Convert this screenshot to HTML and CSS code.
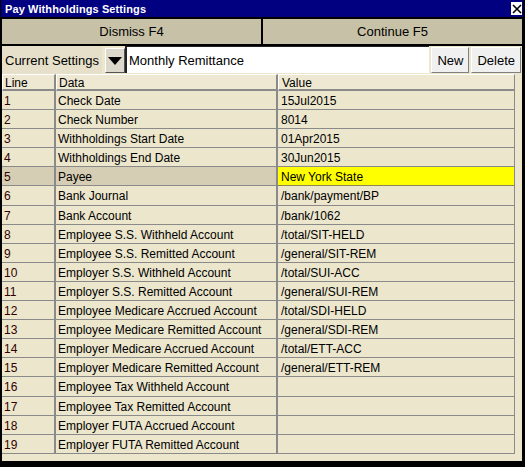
FILE: index.html
```html
<!DOCTYPE html>
<html>
<head>
<meta charset="utf-8">
<link rel="stylesheet" href="styles.css">
</head>
<body>
<div class="window">
  <div class="titlebar">
    <span class="title">Pay Withholdings Settings</span>
    <button class="close"><svg width="10" height="10" viewBox="0 0 10 10"><path d="M1 1 L9 9 M9 1 L1 9" stroke="#000" stroke-width="1.6"/></svg></button>
  </div>
  <div class="actions">
    <button class="action">Dismiss F4</button>
    <button class="action">Continue F5</button>
  </div>
  <div class="settings">
    <span class="label">Current Settings</span>
    <button class="drop"><svg width="14" height="8" viewBox="0 0 14 8"><path d="M0 0 H14 L7 8 Z" fill="#000"/></svg></button>
    <div class="input">Monthly Remittance</div>
    <button class="small">New</button>
    <button class="small">Delete</button>
  </div>
  <div class="table">
    <div class="row head"><div class="c1">Line</div><div class="c2">Data</div><div class="c3">Value</div></div>
    <div class="row"><div class="c1">1</div><div class="c2">Check Date</div><div class="c3">15Jul2015</div></div>
    <div class="row"><div class="c1">2</div><div class="c2">Check Number</div><div class="c3">8014</div></div>
    <div class="row"><div class="c1">3</div><div class="c2">Withholdings Start Date</div><div class="c3">01Apr2015</div></div>
    <div class="row"><div class="c1">4</div><div class="c2">Withholdings End Date</div><div class="c3">30Jun2015</div></div>
    <div class="row sel"><div class="c1">5</div><div class="c2">Payee</div><div class="c3">New York State</div></div>
    <div class="row"><div class="c1">6</div><div class="c2">Bank Journal</div><div class="c3">/bank/payment/BP</div></div>
    <div class="row"><div class="c1">7</div><div class="c2">Bank Account</div><div class="c3">/bank/1062</div></div>
    <div class="row"><div class="c1">8</div><div class="c2">Employee S.S. Withheld Account</div><div class="c3">/total/SIT-HELD</div></div>
    <div class="row"><div class="c1">9</div><div class="c2">Employee S.S. Remitted Account</div><div class="c3">/general/SIT-REM</div></div>
    <div class="row"><div class="c1">10</div><div class="c2">Employer S.S. Withheld Account</div><div class="c3">/total/SUI-ACC</div></div>
    <div class="row"><div class="c1">11</div><div class="c2">Employer S.S. Remitted Account</div><div class="c3">/general/SUI-REM</div></div>
    <div class="row"><div class="c1">12</div><div class="c2">Employee Medicare Accrued Account</div><div class="c3">/total/SDI-HELD</div></div>
    <div class="row"><div class="c1">13</div><div class="c2">Employee Medicare Remitted Account</div><div class="c3">/general/SDI-REM</div></div>
    <div class="row"><div class="c1">14</div><div class="c2">Employer Medicare Accrued Account</div><div class="c3">/total/ETT-ACC</div></div>
    <div class="row"><div class="c1">15</div><div class="c2">Employer Medicare Remitted Account</div><div class="c3">/general/ETT-REM</div></div>
    <div class="row"><div class="c1">16</div><div class="c2">Employee Tax Withheld Account</div><div class="c3"></div></div>
    <div class="row"><div class="c1">17</div><div class="c2">Employee Tax Remitted Account</div><div class="c3"></div></div>
    <div class="row"><div class="c1">18</div><div class="c2">Employer FUTA Accrued Account</div><div class="c3"></div></div>
    <div class="row"><div class="c1">19</div><div class="c2">Employer FUTA Remitted Account</div><div class="c3"></div></div>
  </div>
</div>
</body>
</html>
```

FILE: styles.css
```css
* { box-sizing: border-box; }
html, body { margin: 0; padding: 0; background: #000; }
body { width: 525px; height: 467px; overflow: hidden; font-family: "Liberation Sans", Arial, sans-serif; }
button { font-family: inherit; margin: 0; padding: 0; cursor: default; }

.window {
  width: 525px;
  height: 467px;
  background: #000;
  padding: 0 3px 6px 2px;
  display: flex;
  flex-direction: column;
}

.titlebar {
  height: 17px;
  background: #000080;
  display: flex;
  align-items: center;
  justify-content: space-between;
  margin-left: -1px;
  margin-right: -1px;
  padding: 0 1px 0 4px;
}
.title { color: #fff; font-weight: bold; font-size: 11px; letter-spacing: 0.1px; }
.close {
  width: 11px;
  height: 13px;
  background: #fff;
  border: none;
  display: flex;
  align-items: center;
  justify-content: center;
}

.actions {
  margin-top: 2px;
  height: 25px;
  display: flex;
  gap: 2px;
}
.action {
  flex: 1;
  background: #c7c1a7;
  border: none;
  font-size: 13px;
  color: #000;
}

.settings {
  margin-top: 2px;
  height: 28px;
  background: #ece6cd;
  display: flex;
  align-items: stretch;
}
.label {
  width: 100px;
  padding-left: 3px;
  font-size: 13px;
  display: flex;
  align-items: center;
  background: #e6e0ca;
  color: #000;
}
.drop {
  margin: 2px 0 1px 3px;
  width: 20px;
  background: #dcd8cc;
  border: 1px solid;
  border-color: #fff #555 #555 #fff;
  display: flex;
  align-items: center;
  justify-content: center;
}
.input {
  flex: 1;
  background: #fff;
  border-left: 2px solid #222;
  border-top: 1px solid #222;
  margin-bottom: 1px;
  font-size: 13px;
  padding-left: 2px;
  display: flex;
  align-items: center;
  color: #000;
}
.small {
  margin: 1px 0 1px 2px;
  background: #f0f0f0;
  border: 1px solid;
  border-color: #fff #808080 #808080 #fff;
  font-size: 13px;
  padding: 0 5px;
  color: #000;
}
.small:last-child { margin-right: 1px; }

.table {
  flex: 1;
  background: #ece6cd;
  padding-right: 7px;
}
.row {
  display: grid;
  grid-template-columns: 54px 222px 1fr;
  height: 19.1px;
  font-size: 12px;
  color: #000;
}
.row > div {
  border-bottom: 1px solid #8a8a8a;
  border-right: 2px solid #8a8a8a;
  padding: 2px 0 0 2px;
  line-height: 16px;
  white-space: nowrap;
  overflow: hidden;
}
.row > .c1 { color: #300000; }
.row > .c3 { border-right: 1px solid #8a8a8a; padding-left: 3px; }
.row.head { height: 17px; }
.row.head > div {
  font-size: 12px;
  background: #eee8d2;
  border-top: 1px solid #fff;
  border-left: 1px solid #fff;
  border-bottom: 2px solid #8a8a8a;
  padding-top: 1px;
  line-height: 14px;
  color: #000;
}
.row.sel > .c1, .row.sel > .c2 { background: #d5ceb4; }
.row.sel > .c3 { background: #ffff00; border-bottom-color: #8a8a50; }
```
